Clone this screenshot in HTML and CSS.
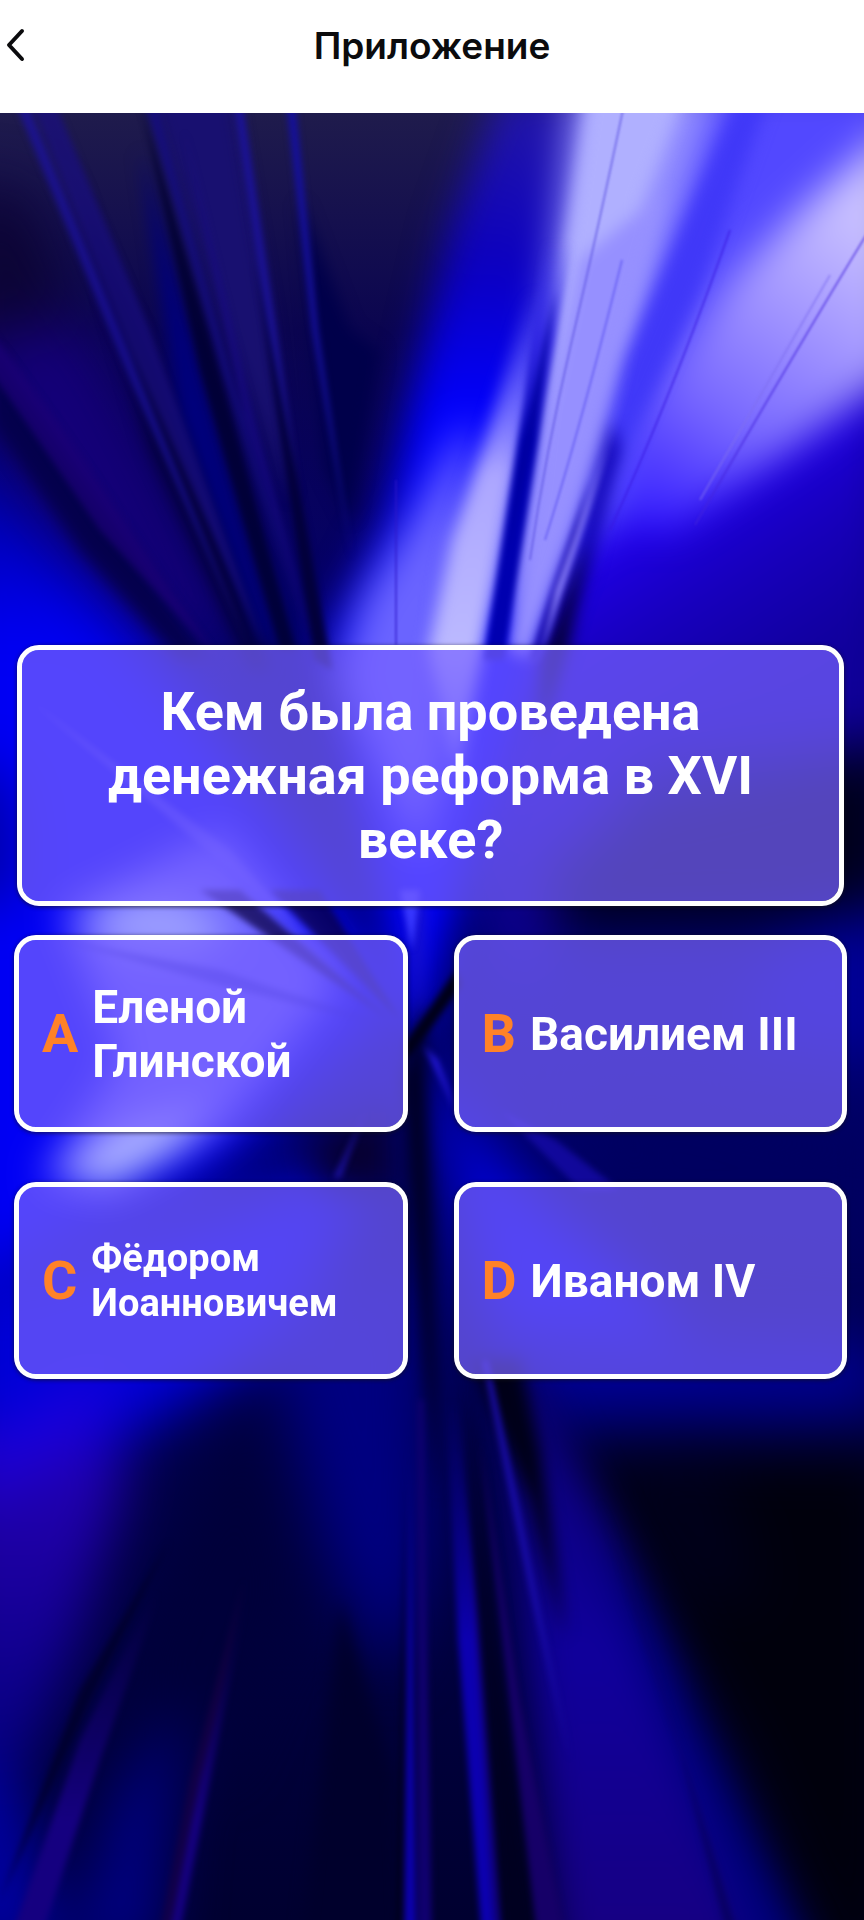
FILE: index.html
```html
<!DOCTYPE html>
<html lang="ru">
<head>
<meta charset="utf-8">
<meta name="viewport" content="width=device-width, initial-scale=1">
<title>Приложение</title>
<link rel="stylesheet" href="styles.css">
</head>
<body>
<header class="topbar">
  <button class="back" type="button" aria-label="Назад">
    <svg class="back-icon" viewBox="0 0 24 36" aria-hidden="true"><path d="M18 4 5 18 18 32"/></svg>
  </button>
  <h1 class="title">Приложение</h1>
</header>
<main class="stage">
  <svg class="backdrop" viewBox="0 113 864 1807" preserveAspectRatio="none" aria-hidden="true">
    <defs>
      <linearGradient id="base" x1="0" y1="0" x2="0" y2="1">
        <stop offset="0" stop-color="#1f1b4c"/><stop offset=".12" stop-color="#0b0550"/><stop offset=".28" stop-color="#040068"/>
        <stop offset=".5" stop-color="#000070"/><stop offset=".75" stop-color="#000048"/><stop offset="1" stop-color="#000030"/>
      </linearGradient>
      <linearGradient id="beamBlue" gradientUnits="userSpaceOnUse" x1="0" y1="113" x2="0" y2="420">
        <stop offset="0" stop-color="#2216a8"/><stop offset=".5" stop-color="#0c00c0"/><stop offset="1" stop-color="#0000ff"/>
      </linearGradient>
      <linearGradient id="leftBlue" gradientUnits="userSpaceOnUse" x1="0" y1="400" x2="0" y2="640">
        <stop offset="0" stop-color="#00007c"/><stop offset="1" stop-color="#0000f4"/>
      </linearGradient>
      <linearGradient id="rightBlue" gradientUnits="userSpaceOnUse" x1="620" y1="480" x2="760" y2="700">
        <stop offset="0" stop-color="#2400ff"/><stop offset=".5" stop-color="#1800c0"/><stop offset="1" stop-color="#10009a"/>
      </linearGradient>
      <linearGradient id="rightGlow" gradientUnits="userSpaceOnUse" x1="860" y1="220" x2="650" y2="520">
        <stop offset="0" stop-color="#c8c0ff"/><stop offset=".3" stop-color="#a498ff"/><stop offset=".65" stop-color="#7868ff"/><stop offset="1" stop-color="#3820ff"/>
      </linearGradient>
      <linearGradient id="coreGlow" gradientUnits="userSpaceOnUse" x1="0" y1="290" x2="0" y2="900">
        <stop offset="0" stop-color="#7c74ff" stop-opacity="0"/><stop offset=".3" stop-color="#aca6ff"/><stop offset=".6" stop-color="#bcbaff"/><stop offset="1" stop-color="#3030ff"/>
      </linearGradient>
      <linearGradient id="slit" gradientUnits="userSpaceOnUse" x1="0" y1="240" x2="0" y2="440">
        <stop offset="0" stop-color="#3c34f0" stop-opacity="0"/><stop offset=".5" stop-color="#2a20e0" stop-opacity=".8"/><stop offset="1" stop-color="#0000b0"/>
      </linearGradient>
      <linearGradient id="rayFade" gradientUnits="userSpaceOnUse" x1="0" y1="1380" x2="0" y2="1920">
        <stop offset="0" stop-color="#0a0070"/><stop offset=".5" stop-color="#10009c"/><stop offset="1" stop-color="#160084"/>
      </linearGradient>
      <linearGradient id="footBlue" gradientUnits="userSpaceOnUse" x1="0" y1="1400" x2="0" y2="1640">
        <stop offset="0" stop-color="#0c00a8" stop-opacity="0"/><stop offset="1" stop-color="#0c00b0"/>
      </linearGradient>
      <linearGradient id="footViolet" gradientUnits="userSpaceOnUse" x1="0" y1="1590" x2="0" y2="1820">
        <stop offset="0" stop-color="#15006a" stop-opacity="0"/><stop offset="1" stop-color="#150080"/>
      </linearGradient>
      <linearGradient id="cornerViolet" gradientUnits="userSpaceOnUse" x1="0" y1="1400" x2="0" y2="1800">
        <stop offset="0" stop-color="#2400c4"/><stop offset=".4" stop-color="#1c00a0"/><stop offset="1" stop-color="#000078"/>
      </linearGradient>
    </defs>
    <rect x="0" y="113" width="864" height="1807" fill="url(#base)"/>

    <g class="soft-xl">
      <path fill="url(#leftBlue)" d="M-60 410 60 550 200 710 400 1000 200 1180 -60 1300Z"/>
      <path fill="#0000a8" d="M-60 760 10 780 20 900 -60 900Z"/>
      <path fill="#140078" d="M-30 340 60 300 110 380 240 640 170 640 40 500Z"/>
      <path fill="#0c0434" d="M-40 180 30 200 70 320 -40 340Z"/>
      <path fill="url(#rightBlue)" d="M520 1000 450 760 560 500 900 330 900 740 640 760Z"/>
      <path fill="#00001c" d="M540 880 640 800 900 740 900 920 560 930Z"/>
      <path fill="#000096" d="M780 930 900 900 900 1060 740 1040Z"/>
      <path fill="#000060" d="M600 1080 900 1140 900 1240 620 1220Z"/>
      <path fill="#0000d8" d="M-50 1300 300 1180 420 1060 300 1330 160 1420 -50 1540Z"/>
      <path fill="url(#cornerViolet)" d="M-60 1430 60 1430 130 1460 80 1640 20 1800 -60 1800Z"/>
      <path fill="#1c00dc" d="M-40 1470 60 1390 120 1370 110 1420 -20 1500Z"/>
      <path fill="#0000e0" d="M420 1060 520 1180 700 1340 500 1360Z"/>
      <path fill="#000090" d="M500 1330 880 1340 880 1410 540 1420Z"/>
      <path fill="#000080" d="M270 1330 420 1250 430 1560 390 1680 330 1560Z"/>
      <path fill="#00003a" d="M170 1560 250 1380 300 1600 220 1780 120 1680Z"/>
      <path fill="#000080" d="M60 1960 110 1800 180 1700 160 1960Z"/>
      <path fill="#0000a0" d="M-50 1740 30 1800 60 1960 -50 1960Z"/>
      <path fill="#00000c" d="M570 1450 900 1450 900 1990 840 1990 740 1760Z"/>
      <path fill="#00001a" d="M590 1450 720 1440 760 1600 690 1600Z"/>
    </g>

    <g class="soft-lg">
      <path fill="url(#beamBlue)" d="M412 1045 325 640 385 520 415 380 450 230 500 90 600 90 580 500Z"/>
      <path fill="#5248ff" d="M575 80 900 80 900 360 740 470 620 520 530 580Z"/>
      <path fill="url(#rightGlow)" d="M900 120 900 370 790 450 670 530 620 520 650 400 730 280 800 210Z"/>
      <path fill="#9894ff" d="M575 80 720 80 620 400 520 620 500 600 550 300Z"/>
      <path fill="#6a64ff" d="M336 680 360 600 410 520 455 440 475 420 450 760 420 860Z"/>
      <path fill="#6a60ff" d="M60 910 220 830 340 980 220 1130 110 1190 40 1180 120 1060Z"/>
      <path fill="#9c9eff" d="M90 905 170 890 240 930 190 960 110 950Z"/>
      <path fill="#b0b6ff" d="M60 1175 130 1120 210 1100 180 1150 110 1190Z"/>
      <path fill="#060030" d="M300 1140 400 1090 400 1200 320 1190Z"/>
      <path fill="url(#rayFade)" d="M500 1370 530 1370 610 1530 680 1680 780 1960 560 1960Z"/>
      <path fill="#000080" d="M590 1530 640 1600 810 1960 750 1960Z"/>
    </g>

    <g class="soft-md">
      <path fill="url(#coreGlow)" d="M428 650 450 540 485 440 534 280 545 240 530 400 483 650 455 780Z"/>
      <path fill="#b0b0ff" d="M590 80 690 80 640 210 560 400 535 480 560 280Z"/>
      <path fill="#9690ff" d="M507 650 540 450 580 260 665 190 600 440 530 660Z"/>
      <path fill="#4038f8" d="M745 80 775 80 700 290 612 490 560 600 625 360Z"/>
      <path fill="#0c00b0" d="M540 670 575 560 612 420 620 450 590 570 560 660 500 800Z"/>
      <path fill="#050034" d="M541 660 570 585 588 540 568 650 540 740Z"/>
      <path fill="#00004a" d="M300 200 350 330 380 350 350 520 325 470Z"/>
      <path fill="#00007c" d="M140 150 190 330 270 640 245 640 180 420Z"/>
      <path fill="#04003c" d="M80 200 180 420 270 670 250 670 150 450Z"/>
      <path fill="#04004c" d="M-10 350 90 490 210 660 180 660 80 550 -10 420Z"/>
      <path fill="#181070" d="M145 80 230 80 270 320 290 500 225 330Z"/>
      <path fill="#000020" d="M424 1000 436 1380 438 1500 426 1380 402 1080Z"/>
      <path fill="#000018" d="M470 1360 520 1360 540 1450 565 1640 530 1500Z"/>
      <path fill="#000020" d="M466 1370 500 1650 545 1960 500 1960 480 1620Z"/>
      <path fill="#00002c" d="M340 1600 395 1780 402 1960 300 1960Z"/>
      <path fill="#2018c0" d="M408 900 424 900 418 1040Z"/>
    </g>

    <g class="soft-sm">
      <path fill="url(#slit)" d="M484 660 504 660 545 400 575 230 545 230 524 400Z"/>
      <path fill="#0000a0" d="M518 470 545 340 556 290 536 420 508 560Z"/>
      <path fill="#1c10b0" d="M530 660 552 590 590 480 554 620 538 660Z"/>
      <path fill="#9a90ff" d="M542 650 588 510 640 340 606 450 556 590Z"/>
      <path fill="#1c12a0" opacity=".75" d="M14 100 26 100 140 380 250 650 130 380Z"/>
      <path fill="#190e82" opacity=".7" d="M30 100 54 100 150 330 265 650 130 350Z"/>
      <path fill="#1b1296" d="M233 100 242 100 276 330 318 630 268 330Z"/>
      <path fill="#15109c" d="M286 100 295 100 318 330 352 560 312 330Z"/>
      <path fill="#140c80" opacity=".8" d="M144 100 156 100 230 370 310 650 222 370Z"/>
      <path fill="#180a88" opacity=".7" d="M184 130 255 420 315 650 245 420Z"/>
      <path fill="#00002e" opacity=".8" d="M140 100 210 340 296 650 280 650 200 370Z"/>
      <path fill="#02003a" d="M255 260 305 520 332 670 314 660Z"/>
      <path fill="#1c0078" opacity=".7" d="M-10 330 60 425 170 590 220 660 100 530 -10 370Z"/>
      <path fill="url(#footBlue)" d="M410 1430 416 1940 404 1940Z"/>
      <path fill="#000016" d="M406 1480 403 1940 397 1940Z"/>
      <path fill="#100070" d="M418 1400 423 1400 432 1940 418 1940Z"/>
      <path fill="url(#footBlue)" d="M446 1400 460 1400 476 1640 494 1940 482 1940 458 1640Z"/>
      <path fill="#1500a4" opacity=".7" d="M464 1480 478 1620 502 1940 494 1940Z"/>
      <path fill="#1a0cac" d="M482 1360 488 1360 520 1510 570 1760 530 1590Z"/>
      <path fill="#160068" d="M480 1440 520 1700 570 1960 540 1960Z"/>
      <path fill="#08005c" opacity=".8" d="M600 1500 625 1570 740 1940 728 1940 680 1750Z"/>
      <path fill="url(#footViolet)" d="M170 1560 150 1620 100 1760 40 1940 10 1940 80 1740Z"/>
      <path fill="#000024" opacity=".7" d="M170 1540 90 1700 0 1900 80 1690Z"/>
      <path fill="#180046" opacity=".7" d="M244 1580 200 1800 170 1940 158 1940 190 1780Z"/>
      <path fill="url(#footViolet)" d="M248 1590 206 1800 178 1940 168 1940 200 1780Z"/>
      <path fill="#3838ff" d="M400 890 420 890 412 950Z"/>
      <path fill="#08003c" opacity=".7" d="M200 890 240 890 390 1020Z"/>
      <path fill="#08003c" opacity=".7" d="M270 890 320 890 400 1020Z"/>
      <path fill="#000018" d="M456 970 462 985 408 1060 404 1045Z"/>
      <path fill="#2418d8" d="M424 1046 438 1060 460 1120Z"/>
      <path fill="#180cb0" opacity=".7" d="M500 1110 556 1140 620 1190 580 1190Z"/>
      <path fill="#2416c8" opacity=".8" d="M366 1110 340 1178 334 1178Z"/>
      <path fill="#7468ff" opacity=".4" d="M30 700 230 850 300 930 160 810Z"/>
      <path fill="#0000a0" opacity=".35" d="M60 940 220 970 400 1030 220 985Z"/>
    </g>

    <g class="hairlines">
      <path stroke="#5a50e0" d="M625 100Q598 230 572 340T530 560"/>
      <path stroke="#4424dc" d="M868 232Q790 360 695 525"/>
      <path stroke="#8070f0" d="M830 275 700 500"/>
      <path stroke="#3818e0" d="M730 230Q670 400 610 530"/>
      <path stroke="#5a50f0" d="M622 260Q580 430 545 540"/>
      <path stroke="#3018c8" d="M396 480V645"/>
    </g>
  </svg>

  <section class="quiz">
    <h2 class="question panel">Кем была проведена денежная реформа в XVI веке?</h2>
    <div class="answers">
      <button class="answer panel" type="button"><span class="letter">A</span><span class="label">Еленой Глинской</span></button>
      <button class="answer panel" type="button"><span class="letter">B</span><span class="label">Василием III</span></button>
      <button class="answer panel" type="button"><span class="letter">C</span><span class="label label-small">Фёдором Иоанновичем</span></button>
      <button class="answer panel" type="button"><span class="letter">D</span><span class="label">Иваном IV</span></button>
    </div>
  </section>
</main>
</body>
</html>
```
FILE: styles.css
```css
* { box-sizing: border-box; }

body {
  margin: 0;
  min-height: 100vh;
  display: flex;
  flex-direction: column;
  background: #fff;
  font-family: Roboto, "Noto Sans", sans-serif;
}

.topbar {
  display: grid;
  grid-template-columns: 48px 1fr 48px;
  align-items: center;
  padding: 22px 0 43px;
}

.back {
  display: flex;
  padding: 0 0 2px 4px;
  border: 0;
  background: none;
  cursor: pointer;
}

.back-icon {
  width: 24px;
  height: 36px;
  fill: none;
  stroke: #0b0b0d;
  stroke-width: 4;
  stroke-linecap: round;
  stroke-linejoin: round;
}

.title {
  margin: 0;
  font: 600 37px/48px Inter, sans-serif;
  color: #0b0b0d;
  text-align: center;
}

.stage {
  position: relative;
  flex: 1;
  padding: 532px 17px 96px 14px;
  overflow: hidden;
  background: #000048;
}

.backdrop {
  position: absolute;
  inset: 0;
  width: 100%;
  height: 100%;
}

.soft-xl { filter: blur(28px); }
.soft-lg { filter: blur(19px); }
.soft-md { filter: blur(8px); }
.soft-sm { filter: blur(3px); }

.hairlines {
  fill: none;
  stroke-width: 2;
  opacity: .6;
  filter: blur(1px);
}

.quiz {
  position: relative;
  display: flex;
  flex-direction: column;
  gap: 29px;
}

.panel {
  border: 5px solid #fff;
  border-radius: 22px;
  background: rgba(120, 98, 255, .7);
  background-clip: padding-box;
  box-shadow: 0 1px 4px rgba(20, 20, 20, .7);
  color: #fff;
}

.question {
  margin: 0 3px;
  padding: 30px 72px 29px;
  font-size: 54px;
  font-weight: 700;
  line-height: 64px;
  text-align: center;
}

.answers {
  display: grid;
  grid-template-columns: 1fr 1fr;
  gap: 50px 46px;
}

.answer {
  display: flex;
  align-items: center;
  gap: 14px;
  min-height: 197px;
  padding: 0 23px;
  font-family: inherit;
  font-weight: 700;
  text-align: left;
  cursor: pointer;
}

.letter {
  font-size: 54px;
  line-height: 64px;
  color: #ff8227;
}

.label {
  font-size: 46px;
  line-height: 54px;
}

.label-small {
  font-size: 38px;
  line-height: 45px;
}
```
